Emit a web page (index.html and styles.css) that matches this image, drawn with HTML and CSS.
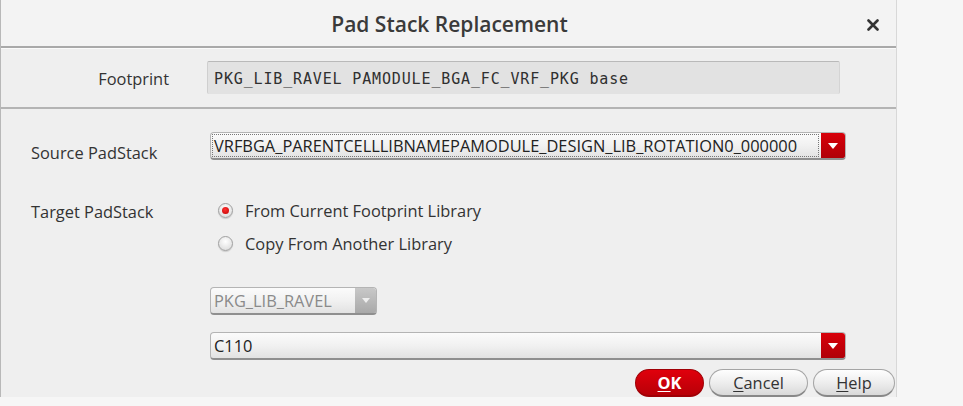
FILE: index.html
```html
<!DOCTYPE html>
<html>
<head>
<meta charset="utf-8">
<link rel="stylesheet" href="styles.css">
</head>
<body>
<div class="dialog">
  <div class="titlebar">
    <div class="title">Pad Stack Replacement</div>
    <div class="close"><svg width="12" height="12" viewBox="0 0 12 12"><path d="M1.5 1.5L10.5 10.5M10.5 1.5L1.5 10.5" stroke="#333" stroke-width="2.6" stroke-linecap="round"/></svg></div>
  </div>
  <div class="footprint">
    <div class="fp-label">Footprint</div>
    <div class="fp-field">PKG_LIB_RAVEL PAMODULE_BGA_FC_VRF_PKG base</div>
  </div>
  <div class="main">
    <div class="row source">
      <div class="label">Source PadStack</div>
      <div class="combo wide">
        <div class="combo-text focused">VRFBGA_PARENTCELLLIBNAMEPAMODULE_DESIGN_LIB_ROTATION0_000000</div>
        <div class="arrow"><svg width="10" height="6" viewBox="0 0 10 6"><path d="M0 0H10L5 6Z" fill="#fff"/></svg></div>
      </div>
    </div>
    <div class="row target">
      <div class="label">Target PadStack</div>
      <div class="radios">
        <div class="radio-item"><span class="radio on"></span>From Current Footprint Library</div>
        <div class="radio-item"><span class="radio"></span>Copy From Another Library</div>
      </div>
    </div>
    <div class="row lib">
      <div class="label"></div>
      <div class="combo small disabled">
        <div class="combo-text">PKG_LIB_RAVEL</div>
        <div class="arrow grey"><svg width="8" height="5" viewBox="0 0 10 6"><path d="M0 0H10L5 6Z" fill="#eee"/></svg></div>
      </div>
    </div>
    <div class="row pad">
      <div class="label"></div>
      <div class="combo wide">
        <div class="combo-text">C110</div>
        <div class="arrow"><svg width="10" height="6" viewBox="0 0 10 6"><path d="M0 0H10L5 6Z" fill="#fff"/></svg></div>
      </div>
    </div>
    <div class="buttons">
      <div class="btn ok"><u>O</u>K</div>
      <div class="btn cancel"><u>C</u>ancel</div>
      <div class="btn help"><u>H</u>elp</div>
    </div>
  </div>
</div>
</body>
</html>
```
FILE: styles.css
```css
html, body {
  margin: 0;
  padding: 0;
  background: #f6f6f6;
  width: 963px;
  height: 406px;
  overflow: hidden;
  font-family: "Open Sans", "Noto Sans", sans-serif;
  color: #2e2e2e;
}
.dialog {
  width: 897px;
  height: 397px;
  background: #efefef;
  border-left: 1px solid #b8b8b8;
  border-right: 1px solid #d8d8d8;
  display: flex;
  flex-direction: column;
  box-sizing: border-box;
}
.titlebar {
  height: 52px;
  background: #f3f3f3;
  border-bottom: 2px solid #a9a9a9;
  box-shadow: 0 1px 0 #fafafa;
  display: flex;
  align-items: center;
  justify-content: center;
  position: relative;
  box-sizing: border-box;
}
.title {
  font-size: 21px;
  font-weight: 600;
  color: #3a3a3a;
  margin-left: 2px;
  margin-top: 1px;
}
.close {
  position: absolute;
  right: 17px;
  top: 19px;
  width: 12px;
  height: 12px;
  display: flex;
}
.footprint {
  height: 65px;
  background: #efefef;
  border-bottom: 2px solid #b4b4b4;
  display: flex;
  align-items: flex-start;
  box-sizing: border-box;
  padding-top: 13px;
}
.fp-label {
  width: 168px;
  text-align: right;
  font-size: 16.4px;
  line-height: 35px;
  color: #333;
}
.fp-field {
  margin-left: 38px;
  width: 633px;
  height: 33px;
  box-sizing: border-box;
  background: #e2e2e2;
  border-top: 1px solid #b9b9b9;
  border-left: 1px solid #cfcfcf;
  border-right: 1px solid #d4d4d4;
  border-radius: 2px;
  font-family: "DejaVu Sans Mono", monospace;
  font-size: 15px;
  letter-spacing: 0.85px;
  color: #303030;
  padding-left: 6px;
  line-height: 35px;
}
.main {
  padding: 19px 0 0 30px;
  display: flex;
  flex-direction: column;
}
.row {
  display: flex;
  align-items: center;
}
.label {
  width: 179px;
  font-size: 16.4px;
  color: #333;
  flex-shrink: 0;
}
.source .label { padding-top: 13px; }
.combo {
  display: flex;
  height: 28px;
  box-sizing: border-box;
  border-radius: 4px;
  border: 1px solid #b4b4b4;
  border-bottom: 2px solid #8f8f8f;
  background: linear-gradient(#fbfbfb, #f1f1f1 50%, #e2e2e2);
  overflow: hidden;
}
.combo.wide { width: 636px; }
.combo.small { width: 167px; }
.combo-text {
  flex: 1;
  font-size: 16.4px;
  line-height: 24px;
  padding-left: 2px;
  color: #222;
  white-space: nowrap;
  margin: 1px;
  overflow: hidden;
}
.combo-text.focused {
  border: 1px dotted #777;
  line-height: 22px;
  margin: 1px 2px 1px 1px;
  padding-left: 1px;
}
.disabled .combo-text { color: #8a8a8a; }
.arrow {
  width: 24px;
  flex-shrink: 0;
  background: linear-gradient(#d8000a, #b00008);
  display: flex;
  align-items: center;
  justify-content: center;
}
.arrow.grey {
  width: 21px;
  background: linear-gradient(#c8c8c8, #a9a9a9);
}
.target { margin-top: 35px; align-items: flex-start; }
.target .label { padding-top: 1px; }
.radios {
  display: flex;
  flex-direction: column;
  padding-left: 8px;
  gap: 11px;
}
.radio-item {
  display: flex;
  align-items: center;
  font-size: 16.4px;
  color: #333;
  height: 22px;
}
.radio {
  width: 15px;
  height: 15px;
  border-radius: 50%;
  box-sizing: border-box;
  border: 1px solid #a0a0a0;
  background: radial-gradient(circle at 50% 35%, #ffffff, #d6d6d6);
  box-shadow: 0 1px 1px rgba(0,0,0,0.15);
  margin-right: 12px;
  position: relative;
}
.radio.on::after {
  content: "";
  position: absolute;
  left: 3px;
  top: 3px;
  width: 7px;
  height: 7px;
  border-radius: 50%;
  background: radial-gradient(circle at 45% 35%, #ff3030, #c00000);
}
.lib { margin-top: 33px; }
.pad { margin-top: 17px; }
.buttons {
  display: flex;
  justify-content: flex-end;
  gap: 5px;
  margin-top: 9px;
  padding-right: 1px;
}
.btn {
  height: 28px;
  box-sizing: border-box;
  border-radius: 14px;
  display: flex;
  align-items: center;
  justify-content: center;
  font-size: 16.4px;
  color: #333;
  border: 1px solid #a5a5a5;
  border-bottom: 2px solid #888;
  background: linear-gradient(#fefefe, #ececec 55%, #d9d9d9);
}
.btn u { text-decoration-thickness: 1px; text-underline-offset: 2px; }
.ok {
  width: 69px;
  background: linear-gradient(#e0000c, #b80008);
  border-color: #a00006;
  color: #fff;
  font-weight: 700;
}
.cancel { width: 99px; }
.help { width: 82px; }
```
